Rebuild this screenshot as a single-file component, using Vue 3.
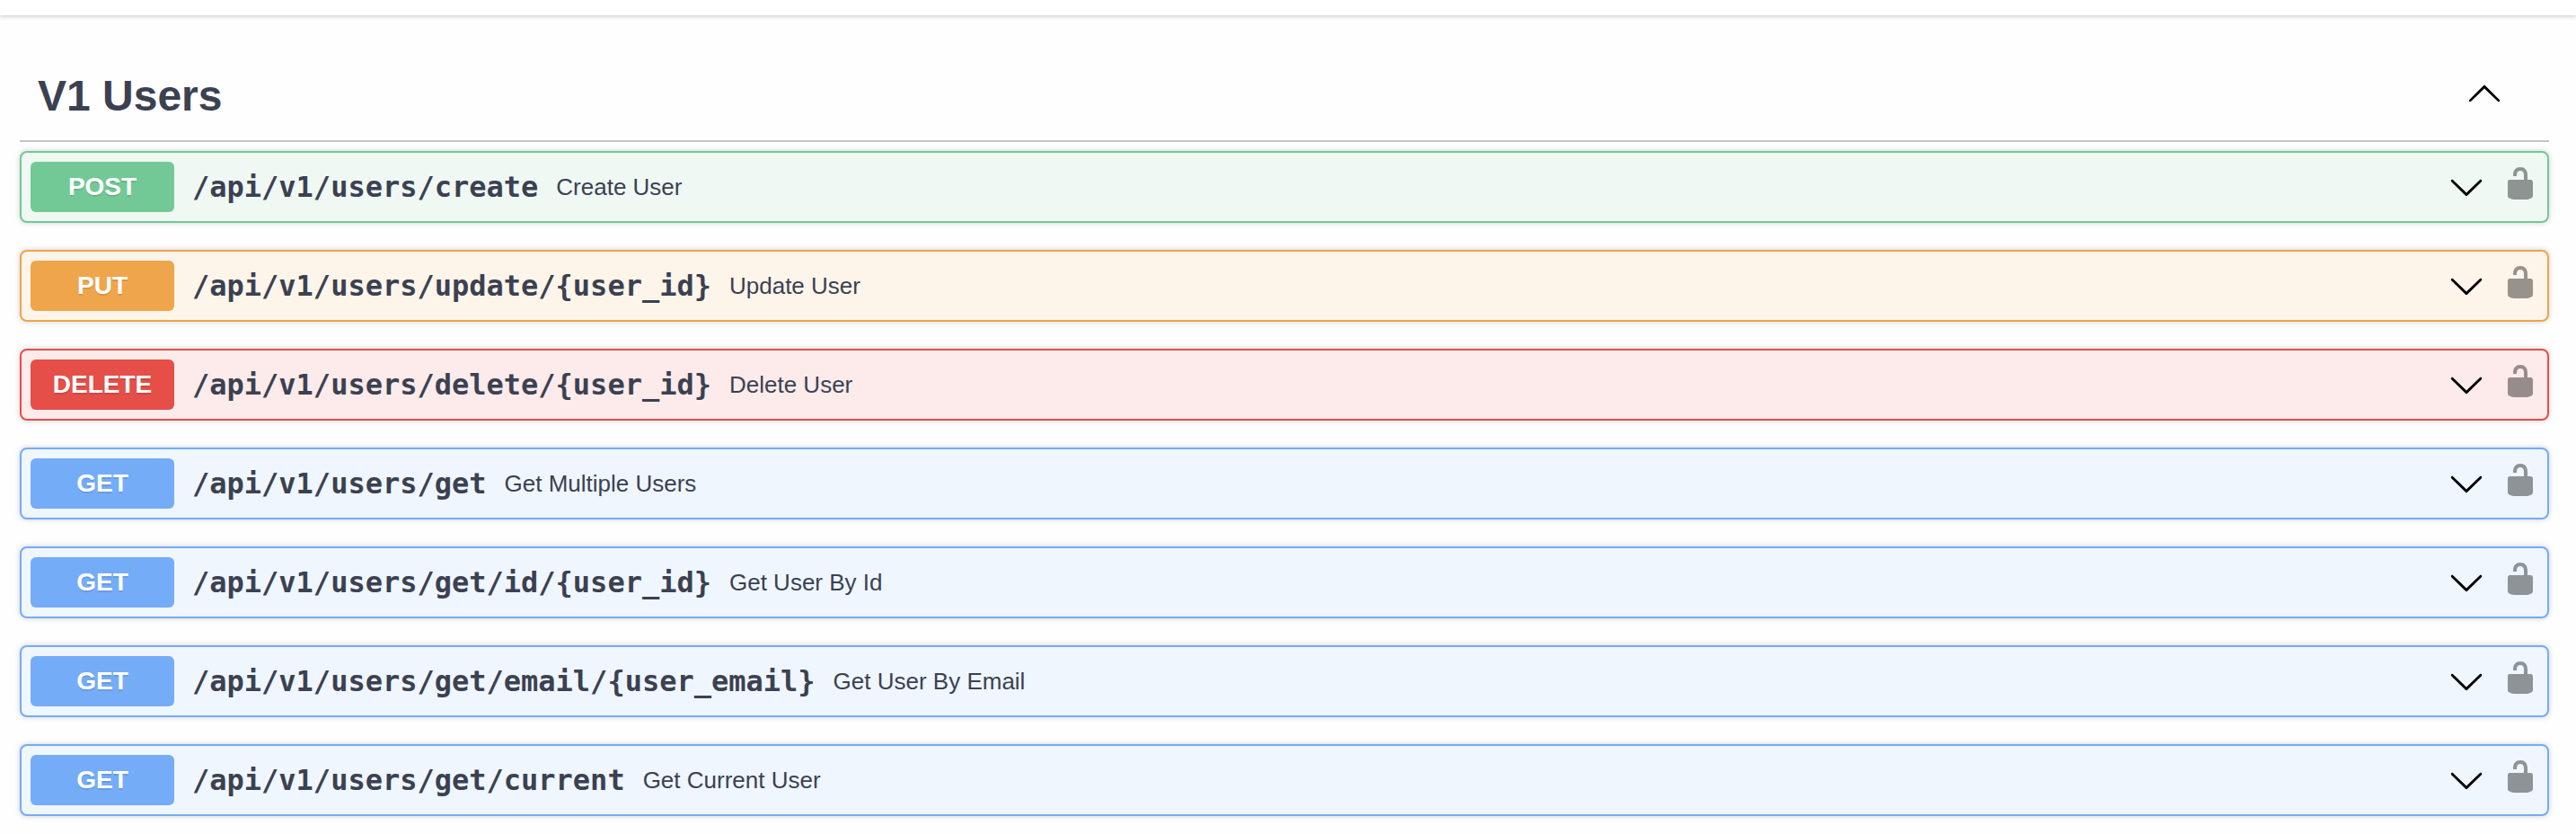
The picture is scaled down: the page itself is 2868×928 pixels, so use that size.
<script setup>
const operations = [
  { method: 'post', path: '/api/v1/users/create', summary: 'Create User' },
  { method: 'put', path: '/api/v1/users/update/{user_id}', summary: 'Update User' },
  { method: 'delete', path: '/api/v1/users/delete/{user_id}', summary: 'Delete User' },
  { method: 'get', path: '/api/v1/users/get', summary: 'Get Multiple Users' },
  { method: 'get', path: '/api/v1/users/get/id/{user_id}', summary: 'Get User By Id' },
  { method: 'get', path: '/api/v1/users/get/email/{user_email}', summary: 'Get User By Email' },
  { method: 'get', path: '/api/v1/users/get/current', summary: 'Get Current User' },
]
</script>

<template>
  <div class="page">
    <div class="scheme-bar"></div>
    <section class="tag-section">
      <header class="tag-header">
        <h3 class="tag-title">V1 Users</h3>
        <svg class="icon" viewBox="0 0 20 20">
          <path d="M 17.418 14.908 c 0.272 0.268 0.709 0.268 0.979 0 s 0.271 -0.701 0 -0.969 l -7.908 -7.83 c -0.27 -0.268 -0.707 -0.268 -0.979 0 l -7.908 7.83 c -0.27 0.268 -0.27 0.701 0 0.969 c 0.271 0.268 0.709 0.268 0.979 0 L 10 7.767 l 7.418 7.141 z" />
        </svg>
      </header>
      <div class="operations">
        <div v-for="op in operations" :key="op.path" class="opblock" :class="op.method">
          <span class="method">{{ op.method.toUpperCase() }}</span>
          <span class="path">{{ op.path }}</span>
          <span class="summary">{{ op.summary }}</span>
          <svg class="icon" viewBox="0 0 20 20">
            <path d="M 17.418 6.109 c 0.272 -0.268 0.709 -0.268 0.979 0 s 0.271 0.701 0 0.969 l -7.908 7.83 c -0.27 0.268 -0.707 0.268 -0.979 0 l -7.908 -7.83 c -0.27 -0.268 -0.27 -0.701 0 -0.969 c 0.271 -0.268 0.709 -0.268 0.979 0 L 10 13.25 l 7.418 -7.141 z" />
          </svg>
          <svg class="icon lock" viewBox="0 0 20 20">
            <path d="M15.8 8H14V5.6C14 2.703 12.665 1 10 1 7.334 1 6 2.703 6 5.6V6h2v-.801C8 3.754 8.797 3 10 3c1.203 0 2 .754 2 2.199V8H4c-.553 0-1 .646-1 1.199V17c0 .549.428 1.139.951 1.307l1.197.387C5.672 18.861 6.55 19 7.1 19h5.8c.549 0 1.428-.139 1.951-.307l1.196-.387c.524-.167.953-.757.953-1.306V9.199C17 8.646 16.352 8 15.8 8z" />
          </svg>
        </div>
      </div>
    </section>
  </div>
</template>

<style>
body {
  background: #fff;
}
</style>

<style scoped>
.page {
  height: 928px;
  overflow: hidden;
  background: #fefefe;
  color: #3b4151;
  font-family: "Liberation Sans", Arial, sans-serif;
}
.scheme-bar {
  height: 17px;
  background: #fff;
  box-shadow: 0 2px 4px rgba(0, 0, 0, 0.17);
}
.tag-section {
  padding: 32px 30px 0 22px;
}
.tag-header {
  display: flex;
  align-items: center;
  justify-content: space-between;
  box-sizing: border-box;
  height: 109px;
  padding: 0 52px 0 20px;
  border-bottom: 2px solid rgba(59, 65, 81, 0.3);
}
.tag-title {
  margin: 8px 0 0;
  font-size: 48px;
  line-height: 56px;
  font-weight: 700;
}
.icon {
  flex: none;
  width: 40px;
  height: 40px;
  fill: #000;
}
.operations {
  display: flex;
  flex-direction: column;
  gap: 30px;
  padding-top: 10px;
}
.opblock {
  --accent: #61affe;
  display: flex;
  align-items: center;
  box-sizing: border-box;
  height: 80px;
  padding: 0 10px;
  border: 2px solid var(--accent);
  border-radius: 8px;
  box-shadow: 0 0 6px rgba(0, 0, 0, 0.19);
  white-space: nowrap;
}
.post {
  --accent: #72c995;
  background: #eff8f3;
}
.put {
  --accent: #efa54b;
  background: #fdf5ea;
}
.delete {
  --accent: #e64e48;
  background: #fcebea;
}
.get {
  --accent: #74acf8;
  background: #eff6fe;
}
.method {
  box-sizing: border-box;
  width: 160px;
  height: 56px;
  border-radius: 6px;
  background: var(--accent);
  color: #fff;
  font-size: 28px;
  font-weight: 700;
  line-height: 56px;
  text-align: center;
  text-shadow: 0 2px 0 rgba(0, 0, 0, 0.1);
}
.path {
  margin-left: 20px;
  font-family: "DejaVu Sans Mono", monospace;
  font-size: 32px;
  font-weight: 700;
}
.summary {
  flex: 1;
  margin-left: 20px;
  font-size: 26px;
}
.lock {
  margin: -8px 0 0 20px;
  opacity: 0.4;
}
</style>
